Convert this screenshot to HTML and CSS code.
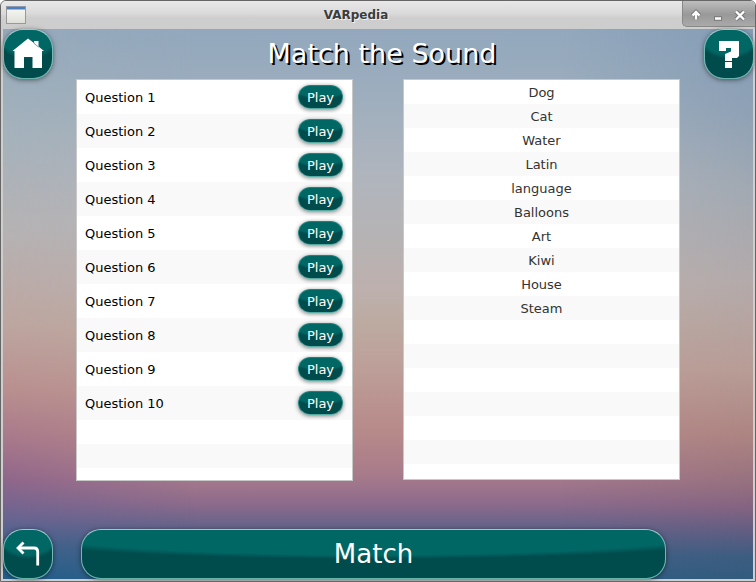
FILE: index.html
```html
<!DOCTYPE html>
<html lang="en">
<head>
<meta charset="utf-8">
<title>VARpedia</title>
<link rel="stylesheet" href="styles.css">
</head>
<body>
<div class="window">
  <header class="titlebar">
    <span class="app-icon"></span>
    <span class="caption">VARpedia</span>
    <div class="controls">
      <svg width="75" height="26" viewBox="0 0 75 26" fill="none" stroke="#777" stroke-width="4.4">
        <g><path d="M15 18.5V13M11.5 14.5L15 11L18.5 14.5"/><path d="M33 17.5H41"/><path d="M55 10.5L63 18.5M63 10.5L55 18.5"/></g>
        <g stroke="#fff" stroke-width="2.4"><path d="M15 18.5V13M11.5 14.5L15 11L18.5 14.5"/><path d="M34 17.5H40"/><path d="M55 10.5L63 18.5M63 10.5L55 18.5"/></g>
      </svg>
    </div>
  </header>
  <main class="scene">
    <div class="top">
      <button class="glossy round" aria-label="Home"><svg width="50" height="50" viewBox="0 0 50 50" fill="#fff"><path d="M25 9.500L31 14V12H35.500V17.500L41 22H39V39H29.500V28H21V39H11.500V22H9.500Z"/><path d="M31.200 13.500V14.500L35.500 18" fill="none" stroke="#006765" stroke-width=".6"/></svg></button>
      <h1>Match the Sound</h1>
      <button class="glossy round help" aria-label="Help"><svg width="50" height="50" viewBox="0 0 50 50" fill="#fff"><path d="M15 12H35V27L33 29H28V32H21V25L27 22.500V19H22V22H15Z"/><path d="M21 33H28V39H21Z"/></svg></button>
    </div>
    <div class="lists">
      <ul class="list questions">
        <li>Question 1<button class="glossy play">Play</button></li>
        <li>Question 2<button class="glossy play">Play</button></li>
        <li>Question 3<button class="glossy play">Play</button></li>
        <li>Question 4<button class="glossy play">Play</button></li>
        <li>Question 5<button class="glossy play">Play</button></li>
        <li>Question 6<button class="glossy play">Play</button></li>
        <li>Question 7<button class="glossy play">Play</button></li>
        <li>Question 8<button class="glossy play">Play</button></li>
        <li>Question 9<button class="glossy play">Play</button></li>
        <li>Question 10<button class="glossy play">Play</button></li>
        <li class="empty"></li><li class="empty"></li><li class="empty"></li>
      </ul>
      <ul class="list answers">
        <li>Dog</li><li>Cat</li><li>Water</li><li>Latin</li><li>language</li><li>Balloons</li><li>Art</li><li>Kiwi</li><li>House</li><li>Steam</li>
        <li></li><li></li><li></li><li></li><li></li><li></li><li></li>
      </ul>
    </div>
    <div class="bottom">
      <button class="glossy round" aria-label="Back"><svg width="50" height="50" viewBox="0 0 50 50" fill="none" stroke="#fff" stroke-width="2.8"><path d="M34.700 36.500V23Q34.700 19 31 19H15"/><path d="M20.500 13.500L15 19L20.500 24.500"/></svg></button>
      <button class="glossy match">Match</button>
    </div>
  </main>
</div>
</body>
</html>
```
FILE: styles.css
```css
* { box-sizing: border-box; }
body { margin: 0; background: #fff; font-family: "DejaVu Sans", sans-serif; font-size: 13px; }
.window {
  width: 756px; height: 582px; overflow: hidden;
  display: flex; flex-direction: column;
  padding: 0 2px 2px; background: #cecece;
  border: 1px solid #666; border-radius: 6px 6px 0 0;
}
.titlebar {
  flex: 0 0 28px; margin: 0 -2px;
  display: grid; grid-template-columns: 29px 1fr 73px; align-items: center;
  background: linear-gradient(#e8e8e8, #dadada 45%, #cecece 60%, #cdcdcd);
}
.app-icon {
  width: 20px; height: 18px; margin-left: 5px;
  border: 1px solid #999; border-top: 0;
  background: linear-gradient(#8d99aa 0 1px, #4b7fc0 1px 3px, #f4f4f1 4px, #dedfd8);
}
.caption { text-align: center; font-size: 12px; font-weight: bold; color: #3c3c3c; text-shadow: 1px 1px #f4f4f4; }
.controls {
  align-self: start; height: 26px;
  background: linear-gradient(#bdbdbd, #999 55%, #aaa);
  border-left: 1px solid #888; border-bottom: 1px solid #888; border-bottom-left-radius: 5px;
}
.controls svg { display: block; margin-left: -2px; }
.scene {
  position: relative; z-index: 0; width: 750px; height: 550px;
  display: flex; flex-direction: column;
  background: linear-gradient(#93a8bd, #9aacbd 9%, #b0b5bd 27%, #b6b3b4 38%, #bdb0ae 47%, #bcaaa0 54%, #bd9e98 62%, #b78a8a 73%, #a87b8b 81%, #8f6c8c 86%, #6a648a 90%, #456186 95%, #2f5f86);
}
.scene::before, .scene::after {
  content: ""; position: absolute; z-index: -1; top: 0; bottom: 0; width: 190px;
}
.scene::before {
  left: 0;
  background: linear-gradient(#95a9bb, #a3b1bb 18%, #b5b2b4 36%, #bda59f 54%, #b88e8e 66%, #a6778b 75%, #8f668b 82%, #686491 89%, #3e618b 94%, #235f8c);
  mask-image: linear-gradient(90deg, #000, transparent);
}
.scene::after {
  right: 0;
  background: linear-gradient(#849cb6, #8ea1b5 15%, #a2a9b2 30%, #b3aaaa 46%, #b89c96 62%, #ac8482 74%, #946f7f 83%, #846382 87%, #5c5d82 92%, #3c5d80 96%, #335b7c);
  mask-image: linear-gradient(270deg, #000, transparent);
}
.top { height: 50px; display: flex; justify-content: space-between; align-items: center; }
h1 { margin: 0 0 0 7px; color: #fff; font-size: 27px; font-weight: normal; line-height: 50px; text-shadow: 2px 2px 0 #000; white-space: nowrap; }
button { font-family: inherit; padding: 0; }
.glossy {
  color: #fff; border: 1px solid; border-color: #9bcaca #75b9b4 #66b3aa;
  background: radial-gradient(ellipse 71% 60% at 50% 0, #006765 86%, #004c4c 100%) border-box;
  box-shadow: 0 1px 5px rgba(0, 0, 0, .5);
}
.round { width: 50px; height: 50px; border-radius: 20px; display: flex; align-items: center; justify-content: center; }
.round svg { flex: none; }
.help { margin-right: -1px; }
.lists { display: flex; align-items: flex-start; gap: 50px; padding-left: 73px; height: 450px; }
.list { list-style: none; margin: 0; padding: 0; width: 277px; overflow: hidden; background: #fff; border: 1px solid #c8c8c8; }
.list li { display: flex; align-items: center; }
.list li:nth-child(even) { background: #f9f9f9; }
.questions { height: 402px; }
.questions li { height: 34px; padding: 0 9px 0 8px; justify-content: space-between; color: #000; }
.questions .empty { height: 24px; }
.play { width: 45px; height: 24px; font-size: 13px; border-radius: 12px; border-color: #23807c #208580 #55aaa2; box-shadow: 0 1px 4px rgba(0, 0, 0, .5); }
.answers { height: 401px; }
.answers li { height: 24px; justify-content: center; color: #333; }
.bottom { display: flex; gap: 28px; height: 50px; }
.match { width: 585px; height: 50px; border-radius: 20px; font-size: 26px; }
```
